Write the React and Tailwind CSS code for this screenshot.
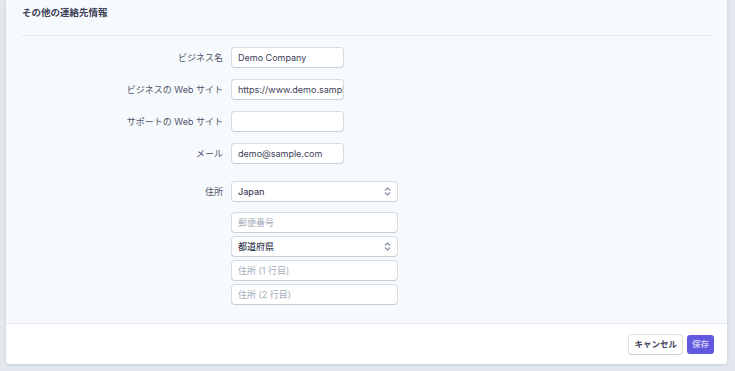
import React from "react";

const field =
  "h-[19px] rounded-[3px] bg-white px-[6px] text-[9px] text-[#3c4257] shadow-[0_0_0_1px_rgba(60,66,87,0.16),0_1px_1px_rgba(0,0,0,0.08)] flex items-center overflow-hidden whitespace-nowrap";

function Chevrons() {
  return (
    <svg width="7" height="9" viewBox="0 0 7 9" fill="none" stroke="#8792a2" strokeWidth="1.2" strokeLinecap="round" strokeLinejoin="round">
      <path d="M1.2 3.2 3.5 1l2.3 2.2" />
      <path d="M1.2 5.8 3.5 8l2.3-2.2" />
    </svg>
  );
}

function Row({ label, children, className = "" }) {
  return (
    <div className={`flex items-center ${className}`}>
      <div className="w-[202px] pr-[1px] text-right text-[9px] text-[#4f566b]">{label}</div>
      <div className="ml-[8px]">{children}</div>
    </div>
  );
}

export default function App() {
  return (
    <div
      className="h-[371px] w-[735px] overflow-hidden bg-[#e3e8ee]"
      style={{ fontFamily: 'Inter, "Noto Sans CJK JP", sans-serif' }}
    >
      <div className="ml-[6px] w-[721px] overflow-hidden rounded-b-[4px] bg-[#f7fafc] shadow-[0_1px_3px_rgba(60,66,87,0.18)]">
        <div className="px-[16px]">
          <div className="flex h-[36px] items-center border-b border-[#e3e8ee] pb-[9px] text-[9.5px] font-bold text-[#3c4257]">
            その他の連絡先情報
          </div>
        </div>

        <div className="flex flex-col pb-[19px] pl-[16px] pt-[12px]">
          <Row label="ビジネス名">
            <div className={`${field} w-[111px]`}>Demo Company</div>
          </Row>
          <Row label="ビジネスの Web サイト" className="mt-[13px]">
            <div className={`${field} w-[111px]`}>https://www.demo.sample.com</div>
          </Row>
          <Row label="サポートの Web サイト" className="mt-[13px]">
            <div className={`${field} w-[111px]`}></div>
          </Row>
          <Row label="メール" className="mt-[13px]">
            <div className={`${field} w-[111px]`}>demo@sample.com</div>
          </Row>

          <Row label="住所" className="mt-[19px]">
            <div className={`${field} w-[165px] justify-between font-medium`}>
              <span>Japan</span>
              <Chevrons />
            </div>
          </Row>
          <Row label="" className="mt-[12px]">
            <div className="flex flex-col gap-[5px]">
              <div className={`${field} w-[165px] text-[#a3acb9]`}>郵便番号</div>
              <div className={`${field} w-[165px] justify-between font-medium`}>
                <span>都道府県</span>
                <Chevrons />
              </div>
              <div className={`${field} w-[165px] text-[#a3acb9]`}>住所 (1 行目)</div>
              <div className={`${field} w-[165px] text-[#a3acb9]`}>住所 (2 行目)</div>
            </div>
          </Row>
        </div>

        <div className="flex h-[41px] items-center justify-end gap-[5px] border-t border-[#e3e8ee] bg-white pr-[13px]">
          <button className="flex h-[19px] items-center rounded-[3px] bg-white px-[5px] text-[8.5px] font-bold text-[#3c4257] shadow-[0_0_0_1px_rgba(60,66,87,0.16),0_1px_1px_rgba(0,0,0,0.08)]">
            キャンセル
          </button>
          <button className="flex h-[19px] items-center rounded-[3px] bg-[#6159e0] px-[5px] text-[8.5px] font-bold text-[#c9c6f7]">
            保存
          </button>
        </div>
      </div>
    </div>
  );
}
